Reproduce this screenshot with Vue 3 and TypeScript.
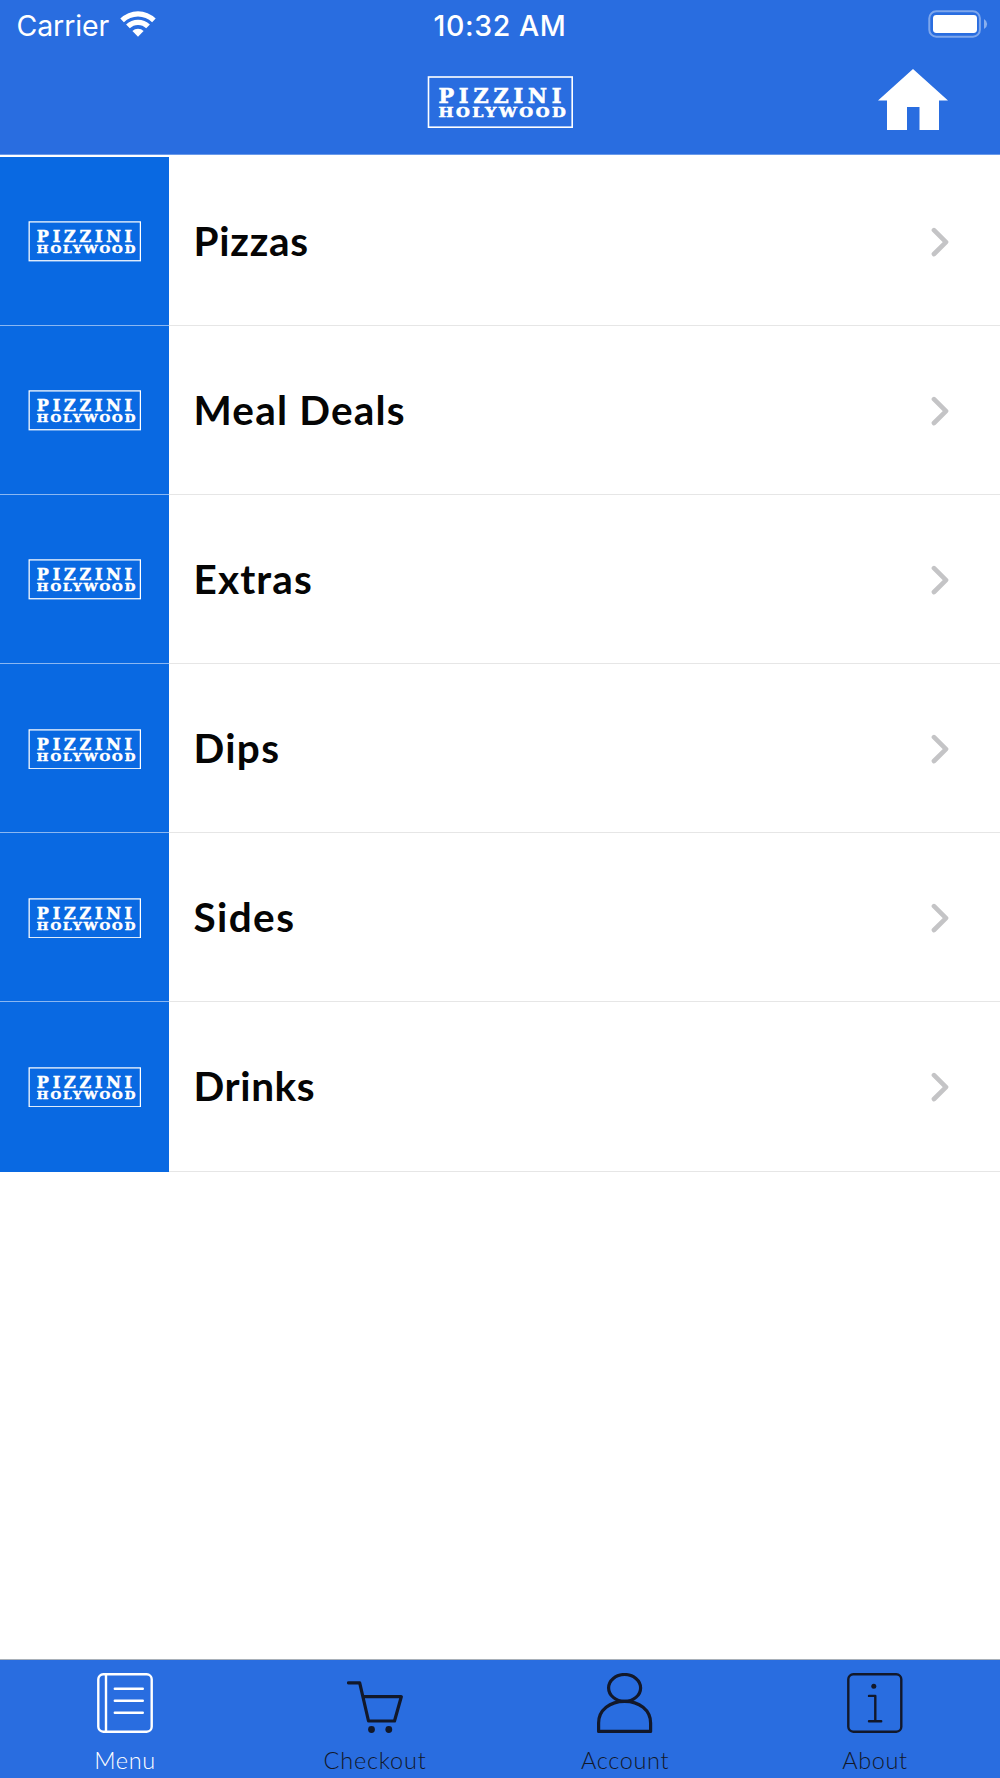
<script setup lang="ts">
import { defineComponent, h } from 'vue'

interface Category {
  name: string
  spacing: number
}

interface Tab {
  id: string
  label: string
  spacing: number
}

const categories: Category[] = [
  { name: 'Pizzas', spacing: 0.75 },
  { name: 'Meal Deals', spacing: 1.2 },
  { name: 'Extras', spacing: 1.1 },
  { name: 'Dips', spacing: 1.3 },
  { name: 'Sides', spacing: 1.4 },
  { name: 'Drinks', spacing: 0.6 },
]

const tabs: Tab[] = [
  { id: 'menu', label: 'Menu', spacing: 0.6 },
  { id: 'checkout', label: 'Checkout', spacing: 0.8 },
  { id: 'account', label: 'Account', spacing: 0.65 },
  { id: 'about', label: 'About', spacing: 0.6 },
]

const activeTab = 'menu'

const BrandLogo = defineComponent({
  setup() {
    const word = (text: string, y: number, size: number, length: number, spacing: number) =>
      h(
        'text',
        {
          x: 11.4,
          y,
          textLength: length,
          lengthAdjust: 'spacingAndGlyphs',
          'letter-spacing': spacing,
          'font-family': '"DejaVu Serif", serif',
          'font-weight': 700,
          'font-size': size,
          fill: '#fff',
          stroke: '#fff',
          'stroke-width': 0.6,
        },
        text,
      )
    return () =>
      h('svg', { viewBox: '0 0 146 52' }, [
        h('rect', { x: 1.5, y: 1, width: 143.7, height: 50.2, fill: 'none', stroke: '#fff', 'stroke-width': 1.6 }),
        word('PIZZINI', 27.3, 20.5, 128, 4.8),
        word('HOLYWOOD', 41.2, 13.6, 130, 2.2),
      ])
  },
})
</script>

<template>
  <div class="screen">
    <header class="header">
      <div class="status">
        <div class="carrier">
          <span class="carrier-name">Carrier</span>
          <svg class="wifi" viewBox="0 0 36 27">
            <path d="M0.3 8.6 A25 25 0 0 1 35.7 8.6 L32.1 12.3 A20 20 0 0 0 3.9 12.3Z" />
            <path d="M6.1 14.6 A16.8 16.8 0 0 1 29.9 14.6 L26.2 18.3 A11.6 11.6 0 0 0 9.8 18.3Z" />
            <path d="M12.4 21 A8 8 0 0 1 23.6 21 L18 26.7Z" />
          </svg>
        </div>
        <span class="time">10:32 AM</span>
        <svg class="battery" viewBox="0 0 60 28">
          <rect x="1.3" y="1.3" width="50.6" height="25.4" rx="7" />
          <rect class="charge" x="5" y="5" width="44" height="18" rx="3.4" />
          <path d="M56 9 Q59.2 11 59.2 14 T56 19Z" />
        </svg>
      </div>
      <div class="navbar">
        <BrandLogo class="nav-logo" />
        <svg class="home" viewBox="0 0 70 62">
          <path d="M35 0 L70 31.5 H61 V61 H41.5 V38 H29 V61 H9 V31.5 H0Z" />
        </svg>
      </div>
    </header>

    <main class="list">
      <div v-for="item in categories" :key="item.name" class="row">
        <div class="thumb"><BrandLogo class="thumb-logo" /></div>
        <span class="name" :style="{ letterSpacing: item.spacing + 'px' }">{{ item.name }}</span>
        <svg class="chevron" viewBox="0 0 18 30">
          <path d="M3 3.2 L15 15.1 L3 27" />
        </svg>
      </div>
    </main>

    <nav class="tabs">
      <div v-for="tab in tabs" :key="tab.id" class="tab" :class="{ active: tab.id === activeTab }">
        <svg class="tab-icon" viewBox="0 0 56 60">
          <template v-if="tab.id === 'menu'">
            <rect x="1.3" y="1.3" width="53.4" height="57.4" rx="5" />
            <path d="M9 1.3 V58.7 M17.8 15.8 H45.8 M17.8 27.8 H45.8 M17.8 39.8 H45.8" />
          </template>
          <template v-else-if="tab.id === 'checkout'">
            <path class="heavy" d="M1.5 9.8 H12.7 L21.5 48 H47.5 L54.3 23.7 H16.3" />
            <circle class="solid" cx="24.5" cy="56.5" r="3.4" />
            <circle class="solid" cx="41.8" cy="56.5" r="3.4" />
          </template>
          <template v-else-if="tab.id === 'account'">
            <ellipse class="heavy" cx="27.6" cy="14.9" rx="16" ry="13.4" />
            <path class="heavy" d="M1.6 58.4 V50 C1.6 37 13 28.3 27.6 28.3 S53.6 37 53.6 50 V58.4Z" />
          </template>
          <template v-else>
            <rect x="1.3" y="1.3" width="53" height="57.4" rx="5" />
            <circle class="solid" cx="26.8" cy="13.2" r="2.5" />
            <path d="M22 22.9 H28.3 V48.3 M22 48.3 H34.2" />
          </template>
        </svg>
        <span class="tab-label" :style="{ letterSpacing: tab.spacing + 'px' }">{{ tab.label }}</span>
      </div>
    </nav>
  </div>
</template>

<style>
body {
  margin: 0;
  background: #fff;
}
</style>

<style scoped>
.screen {
  display: flex;
  flex-direction: column;
  width: 1000px;
  height: 1778px;
  overflow: hidden;
  background: #fff;
}

svg {
  display: block;
}

.header {
  flex: none;
  box-sizing: border-box;
  height: 155px;
  background: #296de0;
  border-bottom: 1px solid #6a9aea;
  color: #fff;
}

.status {
  display: grid;
  grid-template-columns: 1fr auto 1fr;
  align-items: start;
  height: 60px;
  font-family: Inter, "Liberation Sans", sans-serif;
  font-size: 28.5px;
  line-height: 52px;
}

.carrier {
  display: flex;
  padding-left: 16.5px;
}

.carrier-name {
  width: 103.5px;
  letter-spacing: -0.1px;
}

.wifi {
  width: 36px;
  height: 27px;
  margin-top: 10px;
  fill: #fff;
}

.time {
  font-weight: 500;
  letter-spacing: 0.6px;
}

.battery {
  justify-self: end;
  width: 60px;
  height: 28px;
  margin: 10px 12px 0 0;
  fill: rgba(255, 255, 255, 0.45);
}

.battery rect:first-child {
  fill: none;
  stroke: rgba(255, 255, 255, 0.4);
  stroke-width: 2;
}

.battery .charge {
  fill: #fff;
}

.navbar {
  display: grid;
  grid-template-columns: 1fr auto 1fr;
  align-items: start;
  padding: 9px 52px 0;
}

.nav-logo {
  grid-column: 2;
  width: 146px;
  height: 52px;
  margin-top: 7px;
}

.home {
  justify-self: end;
  width: 70px;
  height: 62px;
  fill: #fff;
}

.list {
  flex: 1;
  padding-top: 2px;
}

.row {
  display: flex;
  align-items: center;
  height: 169.1px;
  box-shadow: inset 0 -1px 0 #e6e6e6;
}

.thumb {
  display: flex;
  align-items: center;
  justify-content: center;
  box-sizing: border-box;
  width: 169px;
  height: 100%;
  padding-top: 1px;
  background: #0969e2;
  border-bottom: 1px solid #8ab7f2;
}

.row:last-child .thumb {
  border-bottom-color: #0969e2;
}

.thumb-logo {
  width: 113px;
  height: 40.5px;
}

.name {
  flex: 1;
  padding: 0 0 2px 24.5px;
  font: 700 40.5px/50px Lato, "Liberation Sans", sans-serif;
  color: #050505;
}

.chevron {
  width: 18px;
  height: 30px;
  margin-right: 51px;
}

.chevron path {
  fill: none;
  stroke: #c4c4c6;
  stroke-width: 4.7;
  stroke-linecap: round;
  stroke-linejoin: round;
}

.tabs {
  display: flex;
  flex: none;
  box-sizing: border-box;
  height: 119px;
  background: #296de0;
  border-top: 1px solid #a9b0b8;
  color: #12182a;
}

.tab {
  display: flex;
  flex: 1;
  flex-direction: column;
  align-items: center;
  padding-top: 13px;
}

.tab.active {
  color: #fff;
}

.tab-icon {
  width: 56px;
  height: 60px;
  fill: none;
  stroke: currentColor;
  stroke-width: 2.4;
  stroke-linecap: round;
  stroke-linejoin: round;
}

.tab-icon .heavy {
  stroke-width: 3.2;
}

.tab-icon .solid {
  fill: currentColor;
  stroke: none;
}

.tab-label {
  margin-top: 12px;
  font: 300 23.5px/30px Lato, "Liberation Sans", sans-serif;
}
</style>
